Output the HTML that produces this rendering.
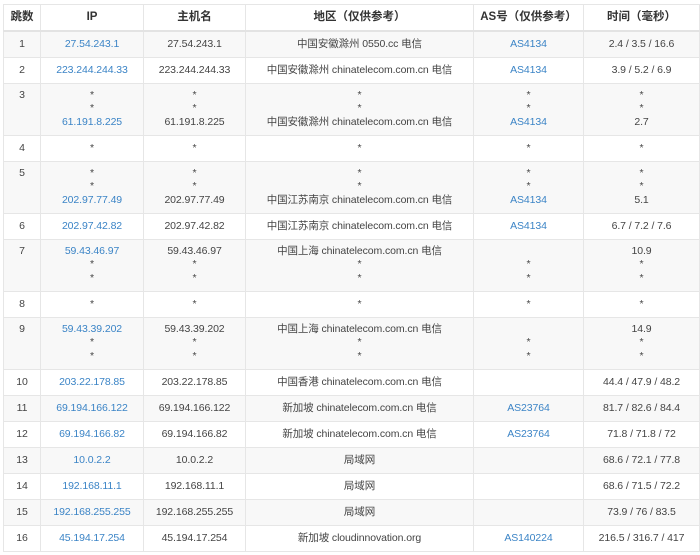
<!DOCTYPE html>
<html><head><meta charset="utf-8"><style>
body{margin:0;background:#fff;width:700px;height:555px;overflow:hidden;font-family:"Liberation Sans","Noto Sans CJK SC",sans-serif;}
table{position:absolute;left:3px;top:4px;border-collapse:collapse;table-layout:fixed;width:696px;font-size:10.5px;letter-spacing:-0.1px;color:#444;}
td,th{border:1px solid #e6e6e6;text-align:center;padding:0;line-height:13px;}
th{height:25px;font-weight:bold;color:#333;font-size:11.5px;border-bottom:2px solid #e3e3e3;letter-spacing:0;}
td{height:25px;vertical-align:middle;}
tr.t td{height:52px;vertical-align:top;padding-top:5px;box-sizing:border-box;}
tr.t td div{height:13.3px;}
tbody tr:nth-child(odd){background:#f8f8f8;}
a{color:#3b84c6;text-decoration:none;}
</style></head><body>
<table>
<colgroup><col style="width:37px"><col style="width:103px"><col style="width:102px"><col style="width:228px"><col style="width:110px"><col style="width:116px"></colgroup>
<thead><tr><th>跳数</th><th>IP</th><th>主机名</th><th>地区（仅供参考）</th><th>AS号（仅供参考）</th><th>时间（毫秒）</th></tr></thead>
<tbody>
<tr><td>1</td><td><a>27.54.243.1</a></td><td>27.54.243.1</td><td>中国安徽滁州 0550.cc 电信</td><td><a>AS4134</a></td><td>2.4 / 3.5 / 16.6</td></tr>
<tr><td>2</td><td><a>223.244.244.33</a></td><td>223.244.244.33</td><td>中国安徽滁州 chinatelecom.com.cn 电信</td><td><a>AS4134</a></td><td>3.9 / 5.2 / 6.9</td></tr>
<tr class="t"><td><div>3</div></td><td><div>*</div><div>*</div><div><a>61.191.8.225</a></div></td><td><div>*</div><div>*</div><div>61.191.8.225</div></td><td><div>*</div><div>*</div><div>中国安徽滁州 chinatelecom.com.cn 电信</div></td><td><div>*</div><div>*</div><div><a>AS4134</a></div></td><td><div>*</div><div>*</div><div>2.7</div></td></tr>
<tr><td>4</td><td>*</td><td>*</td><td>*</td><td>*</td><td>*</td></tr>
<tr class="t"><td><div>5</div></td><td><div>*</div><div>*</div><div><a>202.97.77.49</a></div></td><td><div>*</div><div>*</div><div>202.97.77.49</div></td><td><div>*</div><div>*</div><div>中国江苏南京 chinatelecom.com.cn 电信</div></td><td><div>*</div><div>*</div><div><a>AS4134</a></div></td><td><div>*</div><div>*</div><div>5.1</div></td></tr>
<tr><td>6</td><td><a>202.97.42.82</a></td><td>202.97.42.82</td><td>中国江苏南京 chinatelecom.com.cn 电信</td><td><a>AS4134</a></td><td>6.7 / 7.2 / 7.6</td></tr>
<tr class="t"><td><div>7</div></td><td><div><a>59.43.46.97</a></div><div>*</div><div>*</div></td><td><div>59.43.46.97</div><div>*</div><div>*</div></td><td><div>中国上海 chinatelecom.com.cn 电信</div><div>*</div><div>*</div></td><td><div></div><div>*</div><div>*</div></td><td><div>10.9</div><div>*</div><div>*</div></td></tr>
<tr><td>8</td><td>*</td><td>*</td><td>*</td><td>*</td><td>*</td></tr>
<tr class="t"><td><div>9</div></td><td><div><a>59.43.39.202</a></div><div>*</div><div>*</div></td><td><div>59.43.39.202</div><div>*</div><div>*</div></td><td><div>中国上海 chinatelecom.com.cn 电信</div><div>*</div><div>*</div></td><td><div></div><div>*</div><div>*</div></td><td><div>14.9</div><div>*</div><div>*</div></td></tr>
<tr><td>10</td><td><a>203.22.178.85</a></td><td>203.22.178.85</td><td>中国香港 chinatelecom.com.cn 电信</td><td></td><td>44.4 / 47.9 / 48.2</td></tr>
<tr><td>11</td><td><a>69.194.166.122</a></td><td>69.194.166.122</td><td>新加坡 chinatelecom.com.cn 电信</td><td><a>AS23764</a></td><td>81.7 / 82.6 / 84.4</td></tr>
<tr><td>12</td><td><a>69.194.166.82</a></td><td>69.194.166.82</td><td>新加坡 chinatelecom.com.cn 电信</td><td><a>AS23764</a></td><td>71.8 / 71.8 / 72</td></tr>
<tr><td>13</td><td><a>10.0.2.2</a></td><td>10.0.2.2</td><td>局域网</td><td></td><td>68.6 / 72.1 / 77.8</td></tr>
<tr><td>14</td><td><a>192.168.11.1</a></td><td>192.168.11.1</td><td>局域网</td><td></td><td>68.6 / 71.5 / 72.2</td></tr>
<tr><td>15</td><td><a>192.168.255.255</a></td><td>192.168.255.255</td><td>局域网</td><td></td><td>73.9 / 76 / 83.5</td></tr>
<tr><td>16</td><td><a>45.194.17.254</a></td><td>45.194.17.254</td><td>新加坡 cloudinnovation.org</td><td><a>AS140224</a></td><td>216.5 / 316.7 / 417</td></tr>
</tbody></table>
</body></html>
